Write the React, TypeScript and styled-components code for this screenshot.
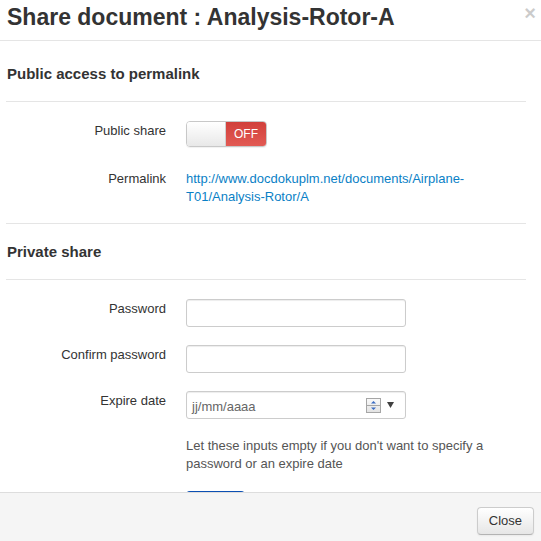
import React from "react";
import styled, { createGlobalStyle } from "styled-components";

const GlobalStyle = createGlobalStyle`
  html, body {
    margin: 0;
    padding: 0;
    height: 100%;
    overflow: hidden;
    background: #fff;
  }
  body {
    font-family: "Liberation Sans", Arial, Helvetica, sans-serif;
    font-size: 13px;
    line-height: 18px;
    color: #333;
  }
  * { box-sizing: border-box; }
`;

const Modal = styled.div`
  display: flex;
  flex-direction: column;
  height: 100vh;
  width: 100%;
  background: #fff;
`;

const Header = styled.div`
  display: flex;
  justify-content: space-between;
  align-items: flex-start;
  padding: 2px 5px 8px 7px;
  border-bottom: 1px solid #e5e5e5;
  flex: none;
`;

const Title = styled.h3`
  margin: 0;
  font-size: 23px;
  font-weight: bold;
  line-height: 30px;
  color: #333;
`;

const CloseX = styled.button`
  margin: 2px 0 0 0;
  padding: 0;
  border: 0;
  background: transparent;
  font-family: "Liberation Sans", Arial, sans-serif;
  font-size: 20px;
  font-weight: bold;
  line-height: 18px;
  color: #000;
  opacity: 0.2;
  cursor: pointer;
`;

const Body = styled.div`
  flex: 1;
  overflow: hidden;
  padding: 5px 15px 0 6px;
`;

const SectionTitle = styled.h4`
  margin: 0 0 19px 0;
  padding: 18px 0 17px 1px;
  font-size: 15px;
  font-weight: bold;
  line-height: 20px;
  color: #333;
  border-bottom: 1px solid #e5e5e5;
`;

const Divider = styled.div`
  border-top: 1px solid #e5e5e5;
`;

const Row = styled.div<{ $gap?: number }>`
  display: grid;
  grid-template-columns: 160px 1fr;
  column-gap: 20px;
  margin-bottom: ${(p) => (p.$gap ?? 18)}px;
`;

const Label = styled.label`
  padding-top: 1px;
  text-align: right;
  line-height: 18px;
  color: #333;
`;

const Toggle = styled.div`
  display: flex;
  width: 81px;
  height: 26px;
  margin-bottom: 4px;
  border: 1px solid #c8c8c8;
  border-radius: 4px;
  overflow: hidden;
  box-shadow: 0 1px 1px rgba(0, 0, 0, 0.06);
`;

const Knob = styled.span`
  width: 39px;
  background: linear-gradient(to bottom, #ffffff, #e8e8e8);
  border-right: 1px solid #d0d0d0;
`;

const OffPart = styled.span`
  flex: 1;
  display: flex;
  align-items: center;
  justify-content: center;
  background: linear-gradient(to bottom, #d1403b, #e25a54);
  color: #fff;
  font-size: 12px;
`;

const Link = styled.a`
  padding-top: 1px;
  color: #0a7fc6;
  text-decoration: none;
  line-height: 18px;
`;

const TextInput = styled.input`
  display: block;
  width: 220px;
  height: 28px;
  padding: 4px;
  border: 1px solid #ccc;
  border-radius: 3px;
  box-shadow: inset 0 1px 1px rgba(0, 0, 0, 0.075);
  font-family: "Liberation Sans", Arial, sans-serif;
  font-size: 13px;
  color: #555;
  background: #fff;
  outline: none;
`;

const DateField = styled.div`
  display: flex;
  align-items: center;
  width: 220px;
  height: 28px;
  padding: 0 11px 0 5px;
  border: 1px solid #ccc;
  border-radius: 3px;
  box-shadow: inset 0 1px 1px rgba(0, 0, 0, 0.075);
  background: #fff;
  color: #666;
  font-size: 13px;
`;

const DateText = styled.span`
  flex: 1;
  padding-top: 3px;
`;

const Help = styled.p`
  margin: 0;
  color: #555;
  line-height: 18px;
`;

const Btn = styled.button<{ $primary?: boolean }>`
  font-family: "Liberation Sans", Arial, sans-serif;
  font-size: 13px;
  line-height: 18px;
  padding: 4px 11px;
  border: 1px solid ${(p) => (p.$primary ? "#0b4fb3" : "#ccc")};
  border-bottom-color: ${(p) => (p.$primary ? "#083c8a" : "#b3b3b3")};
  border-radius: 4px;
  background: ${(p) =>
    p.$primary
      ? "linear-gradient(to bottom, #0088cc, #0044cc)"
      : "linear-gradient(to bottom, #ffffff, #e6e6e6)"};
  color: ${(p) => (p.$primary ? "#fff" : "#333")};
  box-shadow: inset 0 1px 0 rgba(255, 255, 255, 0.2), 0 1px 2px rgba(0, 0, 0, 0.05);
  cursor: pointer;
  justify-self: start;
`;

const Footer = styled.div`
  flex: none;
  display: flex;
  justify-content: flex-end;
  padding: 14px 7px 6px;
  background: #f5f5f5;
  border-top: 1px solid #ddd;
`;

const Spinner = () => (
  <svg width="15" height="15" viewBox="0 0 15 15" style={{ marginRight: 6 }}>
    <defs>
      <linearGradient id="sp" x1="0" y1="0" x2="0" y2="1">
        <stop offset="0" stopColor="#fafafa" />
        <stop offset="1" stopColor="#e2e2e2" />
      </linearGradient>
    </defs>
    <rect x="0.5" y="0.5" width="14" height="14" fill="url(#sp)" stroke="#a6a6a6" />
    <line x1="1" y1="7.5" x2="14" y2="7.5" stroke="#a6a6a6" />
    <path d="M5 5.5 L7.5 3 L10 5.5 Z" fill="#3b6cc2" />
    <path d="M5 9.5 L7.5 12 L10 9.5 Z" fill="#3b6cc2" />
  </svg>
);

const Caret = () => (
  <svg width="7" height="6" viewBox="0 0 7 6">
    <path d="M0 0 L7 0 L3.5 6 Z" fill="#404040" />
  </svg>
);

export default function App() {
  return (
    <>
      <GlobalStyle />
      <Modal>
        <Header>
          <Title>Share document : Analysis-Rotor-A</Title>
          <CloseX aria-label="close">×</CloseX>
        </Header>
        <Body>
          <SectionTitle>Public access to permalink</SectionTitle>
          <Row>
            <Label>Public share</Label>
            <Toggle>
              <Knob />
              <OffPart>OFF</OffPart>
            </Toggle>
          </Row>
          <Row $gap={17}>
            <Label>Permalink</Label>
            <Link href="#">
              http://www.docdokuplm.net/documents/Airplane-T01/Analysis-Rotor/A
            </Link>
          </Row>
          <Divider />
          <SectionTitle>Private share</SectionTitle>
          <Row>
            <Label>Password</Label>
            <TextInput type="password" />
          </Row>
          <Row>
            <Label>Confirm password</Label>
            <TextInput type="password" />
          </Row>
          <Row>
            <Label>Expire date</Label>
            <DateField>
              <DateText>jj/mm/aaaa</DateText>
              <Spinner />
              <Caret />
            </DateField>
          </Row>
          <Row>
            <span />
            <Help>
              Let these inputs empty if you don't want to specify a password or an expire date
            </Help>
          </Row>
          <Row>
            <span />
            <Btn $primary>Share</Btn>
          </Row>
        </Body>
        <Footer>
          <Btn>Close</Btn>
        </Footer>
      </Modal>
    </>
  );
}
